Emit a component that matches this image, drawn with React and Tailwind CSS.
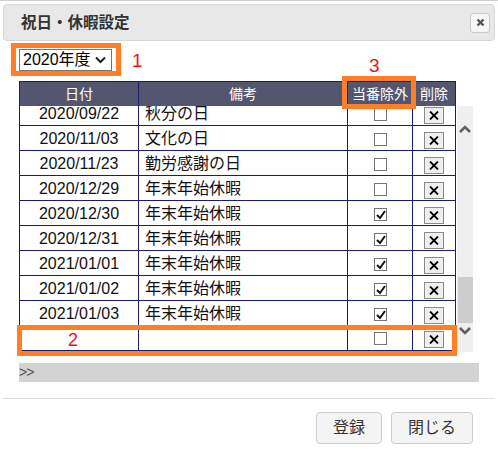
import React from 'react';

const rows = [
  { date: '2020/09/22', note: '秋分の日', checked: false },
  { date: '2020/11/03', note: '文化の日', checked: false },
  { date: '2020/11/23', note: '勤労感謝の日', checked: false },
  { date: '2020/12/29', note: '年末年始休暇', checked: false },
  { date: '2020/12/30', note: '年末年始休暇', checked: true },
  { date: '2020/12/31', note: '年末年始休暇', checked: true },
  { date: '2021/01/01', note: '年末年始休暇', checked: true },
  { date: '2021/01/02', note: '年末年始休暇', checked: true },
  { date: '2021/01/03', note: '年末年始休暇', checked: true },
  { date: '', note: '', checked: false },
];

const CheckBox = ({ checked }) => (
  <div className="w-[13px] h-[13px] border border-[#767676] bg-white relative">
    {checked && (
      <svg width="12" height="12" viewBox="0 0 12 12" className="absolute left-0 top-0">
        <polyline points="2,6 5,9 10,2" fill="none" stroke="#111" strokeWidth="2" />
      </svg>
    )}
  </div>
);

const DeleteButton = () => (
  <div className="w-[20px] h-[17px] bg-[#efefef] border border-[#8a8a8a] flex items-center justify-center">
    <svg width="10" height="9" viewBox="0 0 10 9">
      <path d="M1 0.5 L9 8.5 M9 0.5 L1 8.5" stroke="#000" strokeWidth="1.8" />
    </svg>
  </div>
);

const Chevron = ({ up }) => (
  <svg width="12" height="8" viewBox="0 0 12 8">
    <polyline
      points={up ? '1,7 6,2 11,7' : '1,1 6,6 11,1'}
      fill="none"
      stroke="#606060"
      strokeWidth="2.6"
    />
  </svg>
);

const App = () => {
  return (
    <div
      className="relative w-[498px] h-[450px] bg-white border-t border-[#cfcfcf] text-[#222]"
      style={{ fontFamily: '"Liberation Sans", "Noto Sans CJK JP", sans-serif' }}
    >
      {/* TITLE BAR */}
      <div className="mx-[3px] mt-[3px] h-[37px] bg-[#e8e8e8] border border-[#d8d8d8] rounded-[4px] flex items-center justify-between pl-[17px] pr-[4px]">
        <h2 className="text-[15.5px] font-bold text-[#333]">祝日・休暇設定</h2>
        <button className="w-[20px] h-[20px] bg-[#f6f6f6] border border-[#c8c8c8] rounded-[3px] flex items-center justify-center">
          <svg width="9" height="9" viewBox="0 0 9 9">
            <path d="M1.5 1.5 L7.5 7.5 M7.5 1.5 L1.5 7.5" stroke="#555" strokeWidth="2.4" />
          </svg>
        </button>
      </div>

      {/* YEAR SELECT */}
      <div className="ml-[19px] mt-[8px] flex items-center">
        <div className="w-[93px] h-[22px] border border-[#767676] bg-white flex items-center justify-between pl-[3px] pr-[5px] text-[16px] text-black">
          <span>2020年度</span>
          <svg width="11" height="8" viewBox="0 0 11 8">
            <polyline points="1,1.5 5.5,6 10,1.5" fill="none" stroke="#222" strokeWidth="2" />
          </svg>
        </div>
        <span className="ml-[20px] text-[19px] text-[#e8141c] leading-none">1</span>
      </div>

      {/* TABLE */}
      <div className="ml-[19px] mt-[10px]">
        <div className="w-[437px] h-[25px] bg-[#545670] border-t border-[#1c1c6c] grid grid-cols-[119px_209px_65px_44px] text-white text-[14px]">
          <div className="border-l border-[#1c1c6c] flex items-center justify-center">日付</div>
          <div className="border-l border-[#1c1c6c] flex items-center justify-center">備考</div>
          <div className="border-l border-[#1c1c6c] flex items-center justify-center">当番除外</div>
          <div className="border-l border-r border-[#1c1c6c] flex items-center justify-center">削除</div>
        </div>

        <div className="flex">
          <div className="w-[437px] h-[246px] overflow-hidden">
            <div className="mt-[-5px]">
              {rows.map((r, i) => (
                <div
                  key={i}
                  className="h-[25px] border-b border-[#1c1c6c] grid grid-cols-[119px_209px_65px_44px] text-[16px] text-[#111]"
                >
                  <div className="border-l border-[#1c1c6c] flex items-center justify-center pt-[1px]">{r.date}</div>
                  <div className="border-l border-[#1c1c6c] flex items-center pl-[6px] pt-[1px]">{r.note}</div>
                  <div className="border-l border-[#1c1c6c] flex items-center justify-center pt-[1px]">
                    <CheckBox checked={r.checked} />
                  </div>
                  <div className="border-l border-r border-[#1c1c6c] flex items-center justify-center pt-[3px]">
                    <DeleteButton />
                  </div>
                </div>
              ))}
            </div>
          </div>

          {/* SCROLLBAR */}
          <div className="ml-[1px] w-[16px] h-[246px] bg-[#efefef] flex flex-col items-center">
            <div className="mt-[19px]">
              <Chevron up />
            </div>
            <div className="mt-[144px] w-[15px] h-[46px] bg-[#cdcdcd]" />
            <div className="mt-[4px]">
              <Chevron />
            </div>
          </div>
        </div>

        <div className="mt-[11px] w-[460px] h-[19px] bg-[#d3d3d3] flex items-center text-[14px] text-[#555] tracking-[-1px]">
          &gt;&gt;
        </div>
      </div>

      {/* FOOTER */}
      <div className="mx-[3px] mt-[16px] border-t border-[#dedede]" />
      <div className="mt-[13px] flex justify-end gap-[9px] pr-[25px]">
        <button className="h-[32px] px-[16px] bg-[#f4f4f4] border border-[#cccccc] rounded-[4px] text-[16px] text-[#333]">登録</button>
        <button className="h-[32px] px-[16px] bg-[#f4f4f4] border border-[#cccccc] rounded-[4px] text-[16px] text-[#333]">閉じる</button>
      </div>

      {/* ANNOTATIONS */}
      <div className="absolute left-[11px] top-[42px] w-[110px] h-[33px] border-[5px] border-[#ff7f27]" />
      <div className="absolute left-[342px] top-[75px] w-[74px] h-[33px] border-[5px] border-[#ff7f27]" />
      <span className="absolute left-[369px] top-[55px] text-[19px] text-[#e8141c] leading-none">3</span>
      <div className="absolute left-[17px] top-[324px] w-[440px] h-[31px] border-[5px] border-[#ff7f27]" />
      <span className="absolute left-[68px] top-[330px] text-[18px] text-[#e8141c] leading-none">2</span>
    </div>
  );
};

export default App;
